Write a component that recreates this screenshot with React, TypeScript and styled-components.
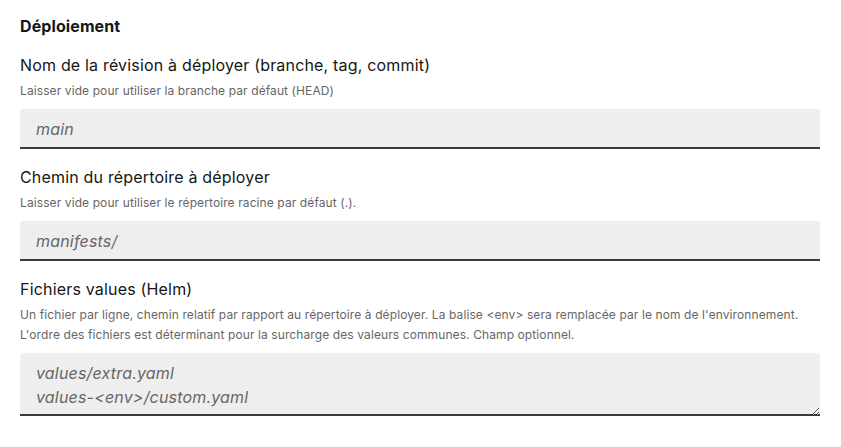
import React from "react";
import styled, { createGlobalStyle } from "styled-components";

const GlobalStyle = createGlobalStyle`
  html, body { margin: 0; padding: 0; background: #ffffff; }
  body {
    font-family: Inter, "Noto Sans", "Liberation Sans", sans-serif;
    color: #161616;
    -webkit-font-smoothing: antialiased;
  }
  * { box-sizing: border-box; }
`;

const Page = styled.div`
  padding: 14px 21px 0 20px;
  display: flex;
  flex-direction: column;
`;

const Title = styled.h3`
  margin: 0 0 15px;
  font-size: 16px;
  line-height: 24px;
  font-weight: 700;
  letter-spacing: 0.1px;
  color: #161616;
`;

const Fields = styled.div`
  display: flex;
  flex-direction: column;
  gap: 16px;
`;

const Group = styled.div`
  display: flex;
  flex-direction: column;
`;

const Label = styled.label`
  display: block;
  font-size: 16px;
  line-height: 24px;
  font-weight: 400;
  letter-spacing: 0.18px;
  color: #161616;
`;

const Hint = styled.span`
  display: block;
  margin-top: 4px;
  font-size: 12px;
  line-height: 20px;
  letter-spacing: 0.1px;
  color: #666666;
`;

const fieldBase = `
  display: block;
  width: 100%;
  margin-top: 8px;
  padding: 8px 16px;
  border: none;
  border-radius: 4px 4px 0 0;
  background: #eeeeee;
  box-shadow: inset 0 -2px 0 0 #3a3a3a;
  font-family: Inter, "Noto Sans", "Liberation Sans", sans-serif;
  font-size: 16px;
  line-height: 24px;
  letter-spacing: 0.18px;
  color: #161616;
  outline: none;
  &::placeholder {
    color: #666666;
    font-style: italic;
    opacity: 1;
  }
`;

const Input = styled.input`
  ${fieldBase}
  height: 40px;
`;

const TextArea = styled.textarea`
  ${fieldBase}
  height: 63px;
  padding-bottom: 7px;
  resize: vertical;
`;

export default function App() {
  return (
    <>
      <GlobalStyle />
      <Page>
        <Title>Déploiement</Title>
        <Fields>
          <Group>
            <Label htmlFor="rev">
              Nom de la révision à déployer (branche, tag, commit)
              <Hint>Laisser vide pour utiliser la branche par défaut (HEAD)</Hint>
            </Label>
            <Input id="rev" placeholder="main" />
          </Group>
          <Group>
            <Label htmlFor="path">
              Chemin du répertoire à déployer
              <Hint>Laisser vide pour utiliser le répertoire racine par défaut (.).</Hint>
            </Label>
            <Input id="path" placeholder="manifests/" />
          </Group>
          <Group>
            <Label htmlFor="values">
              Fichiers values (Helm)
              <Hint>
                Un fichier par ligne, chemin relatif par rapport au répertoire à déployer. La balise
                &lt;env&gt; sera remplacée par le nom de l'environnement.
                <br />
                L'ordre des fichiers est déterminant pour la surcharge des valeurs communes. Champ
                optionnel.
              </Hint>
            </Label>
            <TextArea id="values" rows={2} placeholder={"values/extra.yaml\nvalues-<env>/custom.yaml"} />
          </Group>
        </Fields>
      </Page>
    </>
  );
}
